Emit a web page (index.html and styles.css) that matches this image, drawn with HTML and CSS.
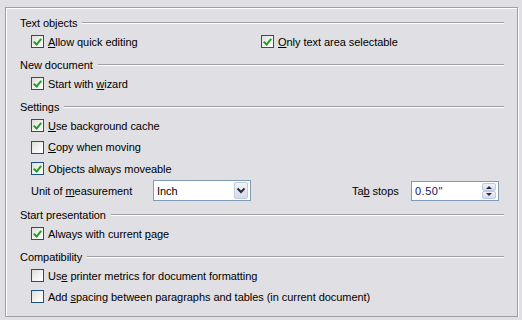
FILE: index.html
```html
<!DOCTYPE html>
<html>
<head>
<meta charset="utf-8">
<link rel="stylesheet" href="styles.css">
</head>
<body>
<div class="frame">
  <section class="group">
    <div class="heading"><span>Text objects</span></div>
    <div class="row two">
      <label class="cb"><span class="box on"></span><span><u>A</u>llow quick editing</span></label>
      <label class="cb"><span class="box on"></span><span><u>O</u>nly text area selectable</span></label>
    </div>
  </section>
  <section class="group">
    <div class="heading"><span>New document</span></div>
    <div class="row">
      <label class="cb"><span class="box on"></span><span>Start with <u>w</u>izard</span></label>
    </div>
  </section>
  <section class="group settings">
    <div class="heading"><span>Settings</span></div>
    <div class="row">
      <label class="cb"><span class="box on"></span><span><u>U</u>se background cache</span></label>
    </div>
    <div class="row">
      <label class="cb"><span class="box"></span><span><u>C</u>opy when moving</span></label>
    </div>
    <div class="row">
      <label class="cb"><span class="box on"></span><span>Objects always moveable</span></label>
    </div>
    <div class="row unit">
      <span class="lbl-unit">Unit of <u>m</u>easurement</span>
      <div class="select">
        <span class="val">Inch</span>
        <span class="dd-btn">
          <svg width="12" height="15" viewBox="0 0 12 15"><path d="M2.5 5.5 L6 9 L9.5 5.5" fill="none" stroke="#2b2b3b" stroke-width="2"/></svg>
        </span>
      </div>
      <span class="lbl-tab">Ta<u>b</u> stops</span>
      <div class="spin">
        <span class="val">0.50"</span>
        <span class="spin-btns">
          <span class="sb"><svg width="12" height="6" viewBox="0 0 12 6"><path d="M3 5 L6 2 L9 5 Z" fill="#2b2b3b"/></svg></span>
          <span class="sb"><svg width="12" height="6" viewBox="0 0 12 6"><path d="M3 1 L6 4 L9 1 Z" fill="#2b2b3b"/></svg></span>
        </span>
      </div>
    </div>
  </section>
  <section class="group">
    <div class="heading"><span>Start presentation</span></div>
    <div class="row">
      <label class="cb"><span class="box on"></span><span>Always with current <u>p</u>age</span></label>
    </div>
  </section>
  <section class="group">
    <div class="heading"><span>Compatibility</span></div>
    <div class="row">
      <label class="cb"><span class="box"></span><span>Us<u>e</u> printer metrics for document formatting</span></label>
    </div>
    <div class="row">
      <label class="cb"><span class="box"></span><span>Add <u>s</u>pacing between paragraphs and tables (in current document)</span></label>
    </div>
  </section>
</div>
</body>
</html>
```
FILE: styles.css
```css
html, body {
  margin: 0;
  padding: 0;
  background: #e0dfe3;
}
body {
  font-family: "Liberation Sans", Arial, sans-serif;
  font-size: 11px;
  color: #000;
  letter-spacing: -0.05px;
  padding: 7px 0 0 5px;
}
.frame {
  box-sizing: border-box;
  width: 513px;
  height: 310px;
  border: 1px solid #a0a0a0;
  box-shadow: inset 1px 1px 0 #fff, 1px 1px 0 #fff;
  padding: 6px 13px 0 14px;
}
.group {
  margin-top: 4px;
}
.group:first-child {
  margin-top: 0;
}
.heading {
  height: 17px;
  display: flex;
  align-items: center;
  gap: 5px;
}
.heading::after {
  content: "";
  flex: 1;
  height: 0;
  border-top: 1px solid #a0a0a0;
  border-bottom: 1px solid #fff;
  margin-top: 1px;
}
.row {
  height: 21px;
  display: flex;
  align-items: center;
  padding-left: 11px;
}
.settings .row {
  height: 21.5px;
}
.row.two {
  display: grid;
  grid-template-columns: 230px 1fr;
  align-items: center;
}
.cb {
  display: flex;
  align-items: center;
  gap: 4px;
}
.box {
  box-sizing: border-box;
  width: 13px;
  height: 13px;
  border: 1px solid #1c5180;
  background: linear-gradient(135deg, #dcdcd7 0%, #f5f5f3 60%, #ffffff 100%);
  position: relative;
}
.box.on::after {
  content: "";
  position: absolute;
  left: 2px;
  top: 1px;
  width: 3px;
  height: 6px;
  border-right: 2px solid #21a121;
  border-bottom: 2px solid #21a121;
  transform: translate(1px, 0) rotate(40deg);
}
u {
  text-decoration: underline;
  text-underline-offset: 1px;
}
.settings .row.unit {
  height: 22.5px;
}
.lbl-unit {
  width: 122px;
}
.select {
  box-sizing: border-box;
  width: 98px;
  height: 21px;
  border: 1px solid #7f9db9;
  background: #fff;
  display: flex;
  align-items: center;
  justify-content: space-between;
  padding: 0 2px 0 3px;
}
.dd-btn {
  box-sizing: border-box;
  width: 14px;
  height: 17px;
  border: 1px solid #c0cbe0;
  border-radius: 2px;
  background: linear-gradient(#f2f4fa, #d4dbea);
  display: flex;
  align-items: center;
  justify-content: center;
}
.lbl-tab {
  margin-left: 101px;
  width: 59px;
}
.spin {
  box-sizing: border-box;
  width: 88px;
  height: 20px;
  border: 1px solid #7f9db9;
  background: #fff;
  display: flex;
  align-items: center;
  justify-content: space-between;
  padding: 0 2px 0 3px;
  color: #14145a;
  letter-spacing: 0.5px;
}
.spin-btns {
  display: flex;
  flex-direction: column;
  width: 14px;
  height: 16px;
}
.sb {
  box-sizing: border-box;
  height: 8px;
  border: 1px solid #c0cbe0;
  border-radius: 2px;
  background: linear-gradient(#f2f4fa, #d4dbea);
  display: flex;
  align-items: center;
  justify-content: center;
  overflow: hidden;
}
```
